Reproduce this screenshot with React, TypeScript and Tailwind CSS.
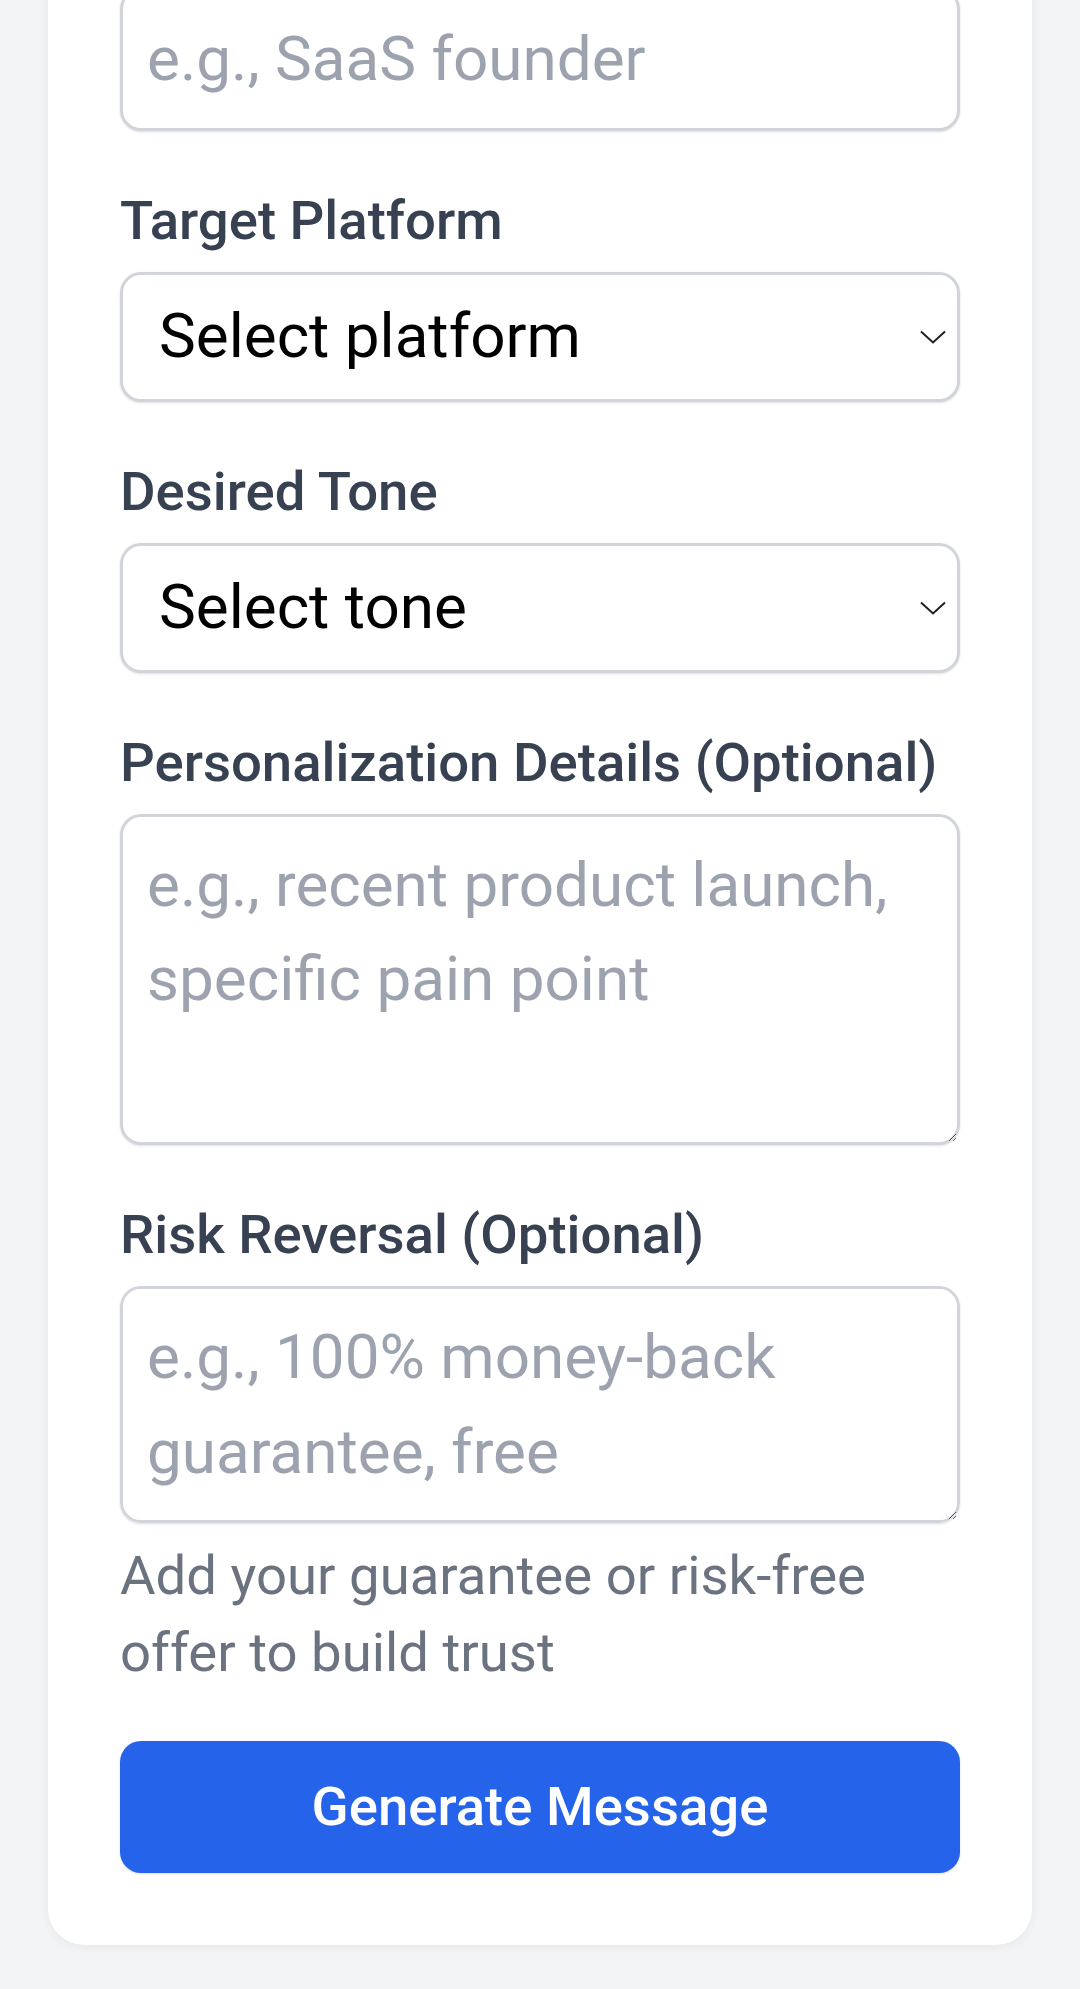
import { type ReactNode } from "react";

const Chevron = () => (
  <svg
    className="pointer-events-none absolute right-[14px] top-1/2 -translate-y-1/2"
    width="26"
    height="14"
    viewBox="0 0 26 14"
    fill="none"
    aria-hidden={true}
  >
    <path d="M1 1.5 L13 12.5 L25 1.5" stroke="#1f1f1f" strokeWidth="2" />
  </svg>
);

const Field = ({ label, children }: { label?: string; children: ReactNode }) => (
  <div className="flex flex-col">
    {label && (
      <label className="block mb-[19px] text-[54.5px] leading-[66px] font-medium text-[#374151]">
        {label}
      </label>
    )}
    {children}
  </div>
);

const boxClass =
  "w-full rounded-[21px] border-[3px] border-[#d1d5db] bg-white shadow-sm text-[62px] leading-[94.5px] outline-none";

const SelectBox = ({ placeholder }: { placeholder: string }) => (
  <div className="relative">
    <select
      defaultValue=""
      className={`${boxClass} appearance-none h-[130px] pl-[36px] pr-[60px] text-black`}
    >
      <option value="" disabled>
        {placeholder}
      </option>
    </select>
    <Chevron />
  </div>
);

export default function App() {
  return (
    <div className="min-h-screen bg-[#f3f4f6] px-[48px] pb-[42px] font-['Roboto',sans-serif] overflow-hidden">
      <div className="mt-[-84px] rounded-[36px] bg-white p-[72px] shadow-[0_2px_10px_rgba(0,0,0,0.06)]">
        <div className="flex flex-col gap-[56px]">
          <Field>
            <input
              type="text"
              placeholder="e.g., SaaS founder"
              className={`${boxClass} px-[24px] py-[21px] placeholder:text-[#9ca3af]`}
            />
          </Field>

          <Field label="Target Platform">
            <SelectBox placeholder="Select platform" />
          </Field>

          <Field label="Desired Tone">
            <SelectBox placeholder="Select tone" />
          </Field>

          <Field label="Personalization Details (Optional)">
            <textarea
              rows={3}
              placeholder="e.g., recent product launch, specific pain point"
              className={`${boxClass} block px-[24px] py-[21px] placeholder:text-[#9ca3af]`}
            />
          </Field>

          <Field label="Risk Reversal (Optional)">
            <textarea
              rows={2}
              placeholder="e.g., 100% money-back guarantee, free consultations, or satisfaction guarantee"
              className={`${boxClass} block px-[24px] py-[21px] placeholder:text-[#9ca3af]`}
            />
            <p className="mt-[14px] text-[54.5px] leading-[77px] text-[#6b7280]">
              Add your guarantee or risk-free offer to build trust
            </p>
          </Field>
        </div>

        <button
          type="button"
          className="mt-[50px] flex h-[132px] w-full items-center justify-center rounded-[21px] bg-[#2563eb] text-[54.5px] font-medium text-white shadow-sm"
        >
          Generate Message
        </button>
      </div>
    </div>
  );
}
